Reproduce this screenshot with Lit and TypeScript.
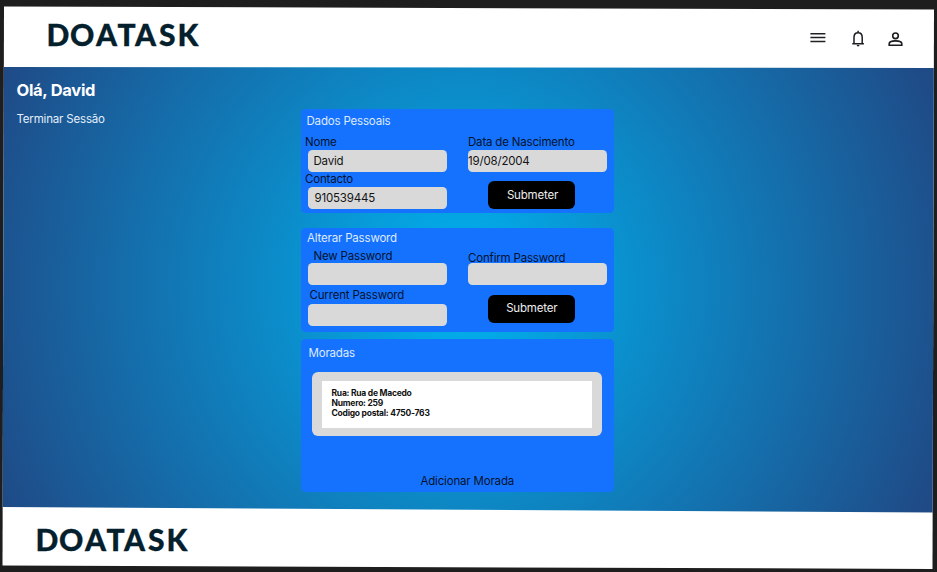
import { LitElement, html, css } from "lit";
import { customElement, property } from "lit/decorators.js";

@customElement("doatask-logo")
class DoataskLogo extends LitElement {
  static styles = css`
    :host { display: block; width: 156px; height: 30px; }
    svg { display: block; overflow: visible; }
    text { font: 900 30px Lato, sans-serif; fill: #04202c; stroke: #04202c; stroke-width: 0.3px; }
  `;
  render() {
    return html`<svg width="156" height="30" viewBox="0 0 156 30">
      <text x="-1.4 22 48 69.6 87 111 129.6" y="25.7">DOATASK</text>
    </svg>`;
  }
}

@customElement("form-field")
class FormField extends LitElement {
  @property() label = "";
  @property() value = "";
  static styles = css`
    :host { display: block; }
    .label { height: 15px; line-height: 15px; white-space: nowrap; color: #05122b;
      margin-left: var(--label-indent, 0px); }
    .box { box-sizing: border-box; height: 21.5px; line-height: 22px; border-radius: 4.5px;
      background: #d9d9d9; color: #141414; margin-top: var(--box-gap, 0px);
      padding-left: var(--value-indent, 6px); white-space: nowrap; }
  `;
  render() {
    return html`<div class="label">${this.label}</div><div class="box">${this.value}</div>`;
  }
}

@customElement("app-root")
class AppRoot extends LitElement {
  static styles = css`
    :host { display: block; width: 937px; height: 572px; overflow: hidden; background: #1e1e1e;
      font: 400 11.5px/15px Inter, sans-serif; letter-spacing: -0.18px; }
    .page { display: flex; flex-direction: column; width: 937px; height: 572px; background: #fff;
      clip-path: polygon(4px 6.5px, 934px 9.5px, 932.5px 569px, 2.5px 565.5px); }
    header { box-sizing: border-box; height: 67px; flex: none; display: flex; justify-content: space-between;
      padding: 20px 30px 0 48px; }
    .icons { display: flex; align-items: flex-start; gap: 22px; padding-top: 9px; }
    .icons svg { display: block; width: 18px; height: 20px; overflow: visible; }
    main { box-sizing: border-box; height: 446px; flex: none; display: flex;
      background: radial-gradient(ellipse 508px 525px at 463px 220px, #00b3f1, #1f4a86);
      clip-path: polygon(0 0, 100% 1px, 100% 445.5px, 0 440px); }
    aside { box-sizing: border-box; width: 301px; padding: 13px 0 0 16.5px; color: #fff; }
    h1 { margin: 0; font-size: 16.5px; line-height: 20px; font-weight: 700; letter-spacing: -0.3px; }
    .logout { margin-top: 12px; color: #e4effa; }
    .cards { width: 313.4px; padding-top: 42px; }
    .card { box-sizing: border-box; height: 104px; border-radius: 4.5px; background: #1472ff;
      padding: 5px 0 0 6.5px; }
    .title { color: #dfeaff; height: 15px; }
    .profile .title { margin-left: -1px; }
    .card.password { margin-top: 15px; padding-top: 2.5px; }
    .password .title { margin-left: -0.5px; }
    .cols { display: flex; gap: 20.5px; }
    .col { width: 139.5px; }
    .profile .cols { padding-top: 6px; }
    .nome { --label-indent: -2.5px; }
    .contacto { --label-indent: -2.5px; --box-gap: 0px; --value-indent: 7px; margin-top: 0.5px; }
    .data { --label-indent: 0.5px; --value-indent: 0.5px; }
    .password .cols { padding-top: 3.5px; }
    .new { --label-indent: 6px; --box-gap: -1px; }
    .current { --label-indent: 2px; --box-gap: 1px; margin-top: 3.5px; }
    .confirm { --label-indent: 0.5px; --box-gap: -2.5px; margin-top: 1.5px; }
    button { display: block; box-sizing: border-box; width: 86.5px; height: 28px; margin: 9.5px 0 0 20.5px;
      padding: 1.5px 0 0 2.5px; border: 0; border-radius: 6px; background: #000; color: #eee; font: inherit;
      letter-spacing: inherit; }
    .password button { margin-top: 10.5px; padding: 0 0 1px 1px; }
    .card.addresses { height: 153px; margin-top: 7px; padding: 6.5px 0 0 10.5px; display: flex; flex-direction: column; }
    .addresses .title { margin-left: -3px; }
    .frame { box-sizing: border-box; width: 290.5px; height: 63.5px; margin-top: 11.5px; padding: 9px 10px 7.5px;
      border-radius: 6px; background: #d9d9d9; }
    .address { box-sizing: border-box; height: 47px; background: #fff; padding: 7px 0 0 10px; color: #111;
      font-size: 8.5px; line-height: 10.1px; font-weight: 700; letter-spacing: -0.24px; }
    .add { margin: 38px 0 0 109px; color: #05122b; }
    footer { flex: 1; padding: 12px 0 0 37px; }
  `;
  render() {
    return html`<div class="page">
      <header>
        <doatask-logo></doatask-logo>
        <div class="icons">
          <svg viewBox="0 0 18 20" fill="none" stroke="#222026" stroke-width="1.5"><path d="M1.4 4.8h15M1.4 8.6h15M1.4 12.4h15"/></svg>
          <svg viewBox="0 0 18 20" fill="none" stroke="#1c1b1f" stroke-width="1.5"><path d="M3.3 14.7h11.6M5 14.5V8.3C5 5.4 6.5 3.7 9.1 3.7s4.1 1.7 4.1 4.6v6.2M9.1 1.7v2"/><path d="M7.7 16h2.8a1.4 1.4 0 0 1-2.8 0z" fill="#1c1b1f" stroke="none"/></svg>
          <svg viewBox="0 0 18 20" fill="none" stroke="#1c1b1f" stroke-width="1.6"><circle cx="6.5" cy="6.8" r="2.8"/><path d="M.2 16.3v-1.6c0-1.8 3.3-2.8 6.3-2.8s6.3 1 6.3 2.8v1.6z"/></svg>
        </div>
      </header>
      <main>
        <aside><h1>Olá, David</h1><div class="logout">Terminar Sessão</div></aside>
        <div class="cards">
          <section class="card profile">
            <div class="title">Dados Pessoais</div>
            <div class="cols">
              <div class="col">
                <form-field class="nome" label="Nome" value="David"></form-field>
                <form-field class="contacto" label="Contacto" value="910539445"></form-field>
              </div>
              <div class="col">
                <form-field class="data" label="Data de Nascimento" value="19/08/2004"></form-field>
                <button>Submeter</button>
              </div>
            </div>
          </section>
          <section class="card password">
            <div class="title">Alterar Password</div>
            <div class="cols">
              <div class="col">
                <form-field class="new" label="New Password"></form-field>
                <form-field class="current" label="Current Password"></form-field>
              </div>
              <div class="col">
                <form-field class="confirm" label="Confirm Password"></form-field>
                <button>Submeter</button>
              </div>
            </div>
          </section>
          <section class="card addresses">
            <div class="title">Moradas</div>
            <div class="frame"><div class="address">
              <div>Rua: Rua de Macedo</div><div>Numero: 259</div><div>Codigo postal: 4750-763</div>
            </div></div>
            <div class="add">Adicionar Morada</div>
          </section>
        </div>
      </main>
      <footer><doatask-logo></doatask-logo></footer>
    </div>`;
  }
}
